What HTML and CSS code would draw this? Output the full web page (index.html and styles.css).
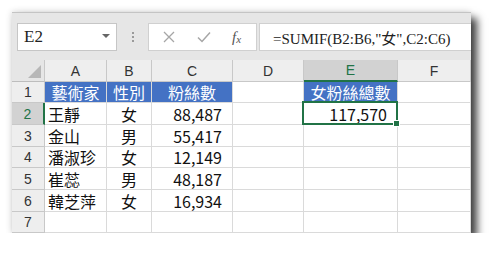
FILE: index.html
```html
<!DOCTYPE html>
<html lang="zh-Hant">
<head>
<meta charset="utf-8">
<link rel="stylesheet" href="styles.css">
</head>
<body>
<div class="window">
  <div class="toolbar">
    <div class="namebox"><span class="name">E2</span><span class="caret"></span></div>
    <div class="dots"><i></i><i></i><i></i></div>
    <div class="btnbox">
      <svg class="ico" width="14" height="14" viewBox="0 0 14 14"><path d="M2 2 L12 12 M12 2 L2 12" stroke="#a6a6a6" stroke-width="1.3" fill="none"/></svg>
      <svg class="ico" width="16" height="14" viewBox="0 0 16 14"><path d="M2 7.5 L6 11.5 L14 2.5" stroke="#a6a6a6" stroke-width="1.5" fill="none"/></svg>
      <span class="fx">f<sub>x</sub></span>
    </div>
    <div class="formula">=SUMIF(B2:B6,"女",C2:C6)</div>
  </div>
  <div class="grid">
    <div class="corner"><span class="tri"></span></div>
    <div class="ch">A</div><div class="ch">B</div><div class="ch">C</div><div class="ch">D</div><div class="ch sel">E</div><div class="ch">F</div>

    <div class="rh">1</div>
    <div class="c blue">藝術家</div><div class="c blue">性別</div><div class="c blue">粉絲數</div><div class="c"></div><div class="c blue">女粉絲總數</div><div class="c"></div>

    <div class="rh sel">2</div>
    <div class="c l">王靜</div><div class="c m">女</div><div class="c r">88,487</div><div class="c"></div><div class="c r active">117,570</div><div class="c"></div>

    <div class="rh">3</div>
    <div class="c l">金山</div><div class="c m">男</div><div class="c r">55,417</div><div class="c"></div><div class="c"></div><div class="c"></div>

    <div class="rh">4</div>
    <div class="c l">潘淑珍</div><div class="c m">女</div><div class="c r">12,149</div><div class="c"></div><div class="c"></div><div class="c"></div>

    <div class="rh">5</div>
    <div class="c l">崔蕊</div><div class="c m">男</div><div class="c r">48,187</div><div class="c"></div><div class="c"></div><div class="c"></div>

    <div class="rh">6</div>
    <div class="c l">韓芝萍</div><div class="c m">女</div><div class="c r">16,934</div><div class="c"></div><div class="c"></div><div class="c"></div>

    <div class="rh">7</div>
    <div class="c"></div><div class="c"></div><div class="c"></div><div class="c"></div><div class="c"></div><div class="c"></div>
  </div>
</div>
</body>
</html>
```
FILE: styles.css
```css
* { box-sizing: border-box; }
html, body { margin: 0; padding: 0; background: #ffffff; }
body { padding: 12px 0 0 12px; }

.window {
  width: 459px;
  height: 221px;
  background: #ffffff;
  border-top: 1px solid #c4c4c4;
  box-shadow: 6px 6px 8px rgba(0,0,0,0.75), -1px -1px 6px rgba(0,0,0,0.12);
  display: flex;
  flex-direction: column;
  overflow: hidden;
}

.toolbar {
  height: 47px;
  background: #e6e6e6;
  display: flex;
  align-items: flex-start;
  padding: 10px 0 0 5px;
}
.namebox {
  width: 100px;
  height: 28px;
  background: #fff;
  border: 1px solid #c6c6c6;
  display: flex;
  align-items: center;
  justify-content: space-between;
  padding: 0 6px 0 6px;
}
.name {
  font-family: "Liberation Serif", serif;
  font-size: 17px;
  color: #222;
}
.caret {
  width: 0; height: 0;
  border-left: 4px solid transparent;
  border-right: 4px solid transparent;
  border-top: 4px solid #666;
  margin-top: -2px;
}
.dots {
  width: 31px;
  height: 28px;
  display: flex;
  flex-direction: column;
  align-items: center;
  justify-content: center;
  gap: 2px;
}
.dots i { width: 2px; height: 2px; background: #9a9a9a; display: block; }
.btnbox {
  width: 109px;
  height: 28px;
  background: #fff;
  border: 1px solid #d0d0d0;
  display: flex;
  align-items: center;
  padding: 0 0 0 13px;
  gap: 20px;
}
.fx {
  font-family: "Liberation Serif", serif;
  font-style: italic;
  font-size: 15px;
  color: #555;
}
.fx sub { font-size: 11px; vertical-align: -1px; }
.formula {
  margin-left: 2px;
  flex: 1;
  height: 28px;
  background: #fff;
  border: 1px solid #d0d0d0;
  border-right: none;
  font-family: "Liberation Serif", "Noto Sans CJK TC", serif;
  font-size: 15px;
  color: #222;
  display: flex;
  align-items: center;
  padding-left: 13px;
  white-space: nowrap;
}

.grid {
  flex: 1;
  display: grid;
  grid-template-columns: 33px 62px 45px 81px 71px 94px 73px;
  grid-template-rows: 22px 21px 22px 22px 21px 22px 22px 21px;
}
.corner, .ch, .rh {
  background: #e6e6e6;
  border-right: 1px solid #c8c8c8;
  border-bottom: 1px solid #c8c8c8;
  font-family: "Liberation Sans", sans-serif;
  font-size: 14px;
  line-height: 16px;
  color: #333;
  display: flex;
  align-items: center;
  justify-content: center;
}
.corner { position: relative; border-bottom-color: #bdbdbd; }
.tri {
  position: absolute;
  right: 3px; bottom: 3px;
  width: 0; height: 0;
  border-left: 13px solid transparent;
  border-bottom: 13px solid #b7b7b7;
}
.ch { background: #eeeeee; }
.ch.sel { background: #d2d2d2; color: #217346; border-bottom: 2px solid #217346; }
.rh { background: #eeeeee; }
.rh.sel { background: #d2d2d2; color: #217346; border-right: 2px solid #217346; }

.c {
  border-right: 1px solid #dadada;
  border-bottom: 1px solid #dadada;
  font-family: "Noto Sans CJK TC", sans-serif;
  font-size: 16px;
  line-height: 16px;
  color: #111;
  display: flex;
  align-items: center;
  white-space: nowrap;
}
.c.blue { background: #4472c4; color: #fff; justify-content: center; }
.c.l { padding-left: 3px; }
.c.m { justify-content: center; }
.c.r { justify-content: flex-end; padding-right: 10px; }
.c.active { position: relative; }
.c.active::after {
  content: "";
  position: absolute;
  left: -2px; top: -2px; right: -1px; bottom: -1px;
  border: 2px solid #217346;
}
.c.active::before {
  content: "";
  position: absolute;
  right: -3px; bottom: -3px;
  width: 5px; height: 5px;
  background: #217346;
  border: 1px solid #fff;
  z-index: 2;
}
```
